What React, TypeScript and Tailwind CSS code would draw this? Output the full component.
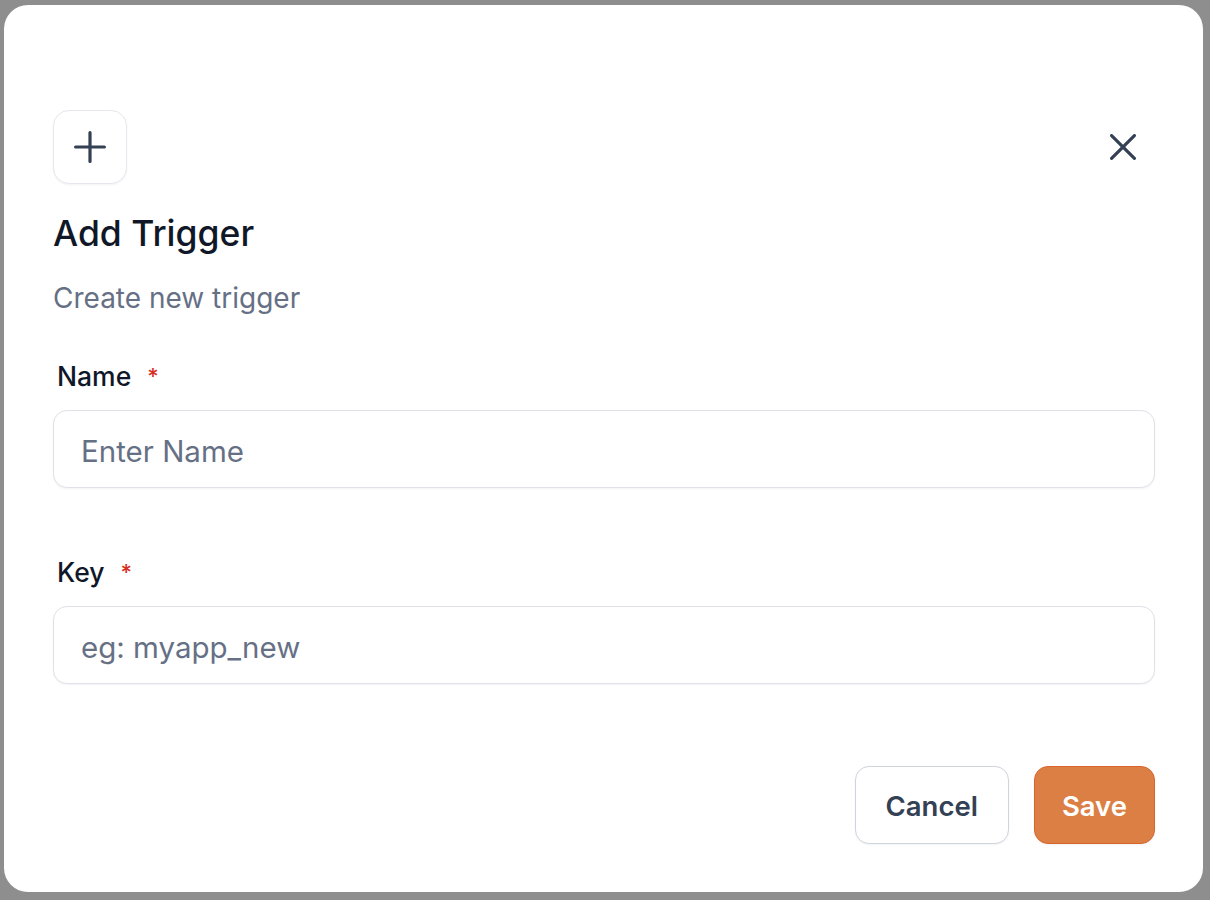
import { useState } from 'react'

function PlusIcon() {
  return (
    <svg width="32" height="32" viewBox="0 0 32 32" fill="none" stroke="#344054" strokeWidth="3.2" strokeLinecap="round">
      <path d="M16 1.6v28.8M1.6 16h28.8" />
    </svg>
  )
}

function CloseIcon() {
  return (
    <svg width="26" height="26" viewBox="0 0 26 26" fill="none" stroke="#344054" strokeWidth="3.2" strokeLinecap="round">
      <path d="M1.6 1.6l22.8 22.8M24.4 1.6L1.6 24.4" />
    </svg>
  )
}

function Field({
  label,
  placeholder,
  value,
  onChange,
}: {
  label: string
  placeholder: string
  value: string
  onChange: (v: string) => void
}) {
  return (
    <div className="flex flex-col">
      <label className="flex items-center pl-[4px] text-[26.5px] leading-[36px] font-medium text-[#101828]">
        {label}
        <span className="ml-[16px] text-[22px] text-[#d92d20]">*</span>
      </label>
      <input
        value={value}
        onChange={(e) => onChange(e.target.value)}
        placeholder={placeholder}
        className="mt-[16px] h-[78px] w-full rounded-[14px] border-[1.5px] border-[#e0e2e8] bg-white px-[27px] pt-[3px] text-[29.5px] text-[#101828] shadow-[0_1px_2px_rgba(16,24,40,0.05)] outline-none placeholder:text-[#667085]"
      />
    </div>
  )
}

export default function App() {
  const [name, setName] = useState('')
  const [key, setKey] = useState('')

  return (
    <div
      className="h-[900px] w-full bg-[#8e8e8e] pt-[5px] pl-[4px] pr-[7px] pb-[8px]"
      style={{ fontFamily: 'Inter, "Noto Sans", sans-serif' }}
    >
      <div className="flex h-full flex-col rounded-[24px] bg-white pt-[105px] pl-[49px] pr-[48px] pb-[48px]">
        <div className="flex items-center justify-between">
          <div className="flex h-[74px] w-[74px] items-center justify-center rounded-[16px] border-[1.5px] border-[#e6e8ee] bg-white shadow-[0_1px_2px_rgba(16,24,40,0.05)]">
            <PlusIcon />
          </div>
          <button className="mr-[10px] flex h-[44px] w-[44px] items-center justify-center">
            <CloseIcon />
          </button>
        </div>

        <h2 className="mt-[28px] text-[35.5px] leading-[44px] font-medium text-[#101828]">Add Trigger</h2>
        <p className="mt-[22px] text-[28px] leading-[40px] text-[#667085]">Create new trigger</p>

        <div className="mt-[40px] flex flex-col gap-[66px]">
          <Field label="Name" placeholder="Enter Name" value={name} onChange={setName} />
          <Field label="Key" placeholder="eg: myapp_new" value={key} onChange={setKey} />
        </div>

        <div className="mt-[82px] flex justify-end gap-[25px]">
          <button className="h-[78px] rounded-[14px] border-[1.5px] border-[#d0d5dd] bg-white px-[30px] pt-[3px] text-[27.5px] font-semibold text-[#344054] shadow-[0_1px_2px_rgba(16,24,40,0.05)]">
            Cancel
          </button>
          <button className="h-[78px] rounded-[14px] border-[1.5px] border-[#d9652c] bg-[#dc7f45] px-[27px] pt-[3px] text-[27.5px] font-semibold text-white shadow-[0_1px_2px_rgba(16,24,40,0.05)]">
            Save
          </button>
        </div>
      </div>
    </div>
  )
}
